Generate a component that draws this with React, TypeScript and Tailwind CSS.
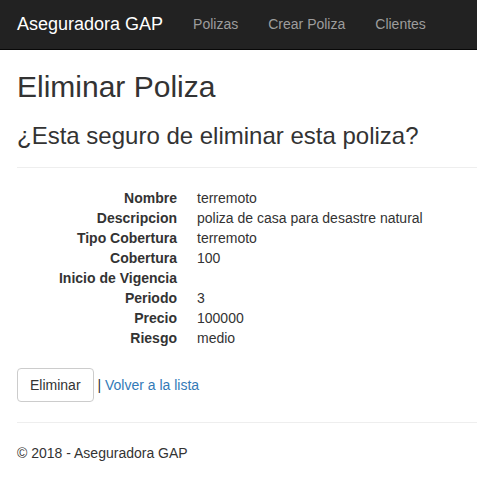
import React from 'react';

const detalles: [string, string][] = [
  ['Nombre', 'terremoto'],
  ['Descripcion', 'poliza de casa para desastre natural'],
  ['Tipo Cobertura', 'terremoto'],
  ['Cobertura', '100'],
  ['Inicio de Vigencia', ''],
  ['Periodo', '3'],
  ['Precio', '100000'],
  ['Riesgo', 'medio'],
];

export default function App() {
  return (
    <div className="min-h-screen bg-white text-[14px] leading-[20px] text-[#333] font-['Liberation_Sans',Arial,sans-serif]">
      <nav className="h-[50px] bg-[#222] border-b border-[#080808] flex items-center pb-[2px] px-[17px]">
        <a className="text-[18px] leading-[20px] text-white pr-[15px]">Aseguradora GAP</a>
        <a className="px-[15px] text-[#9d9d9d]">Polizas</a>
        <a className="px-[15px] text-[#9d9d9d]">Crear Poliza</a>
        <a className="px-[15px] text-[#9d9d9d]">Clientes</a>
      </nav>

      <div className="pl-[17px]">
        <h2 className="mt-[20px] text-[30px] leading-[33px] font-normal">Eliminar Poliza</h2>
        <h3 className="mt-[20px] text-[24px] leading-[26px] font-normal">
          ¿Esta seguro de eliminar esta poliza?
        </h3>

        <hr className="mt-[18px] border-t border-[#eee]" />

        <dl className="mt-[20px] grid grid-cols-[160px_1fr] gap-x-[20px]">
          {detalles.map(([label, valor]) =>
          <React.Fragment key={label}>
              <dt className="text-right font-bold whitespace-nowrap">{label}</dt>
              <dd className="min-h-[20px]">{valor}</dd>
            </React.Fragment>
          )}
        </dl>

        <div className="mt-[20px]">
          <button className="inline-block px-[12px] py-[6px] border border-[#ccc] rounded-[4px] bg-white text-[#333]">
            Eliminar
          </button>{' '}
          | <a className="text-[#337ab7]">Volver a la lista</a>
        </div>

        <hr className="mt-[20px] border-t border-[#eee]" />

        <footer className="mt-[20px]">
          <p>© 2018 - Aseguradora GAP</p>
        </footer>
      </div>
    </div>);

}
